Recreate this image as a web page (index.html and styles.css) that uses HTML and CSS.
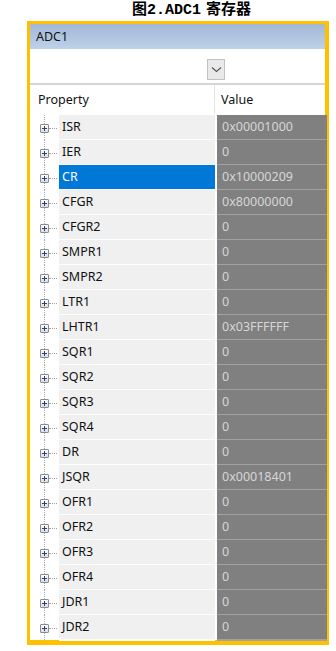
FILE: index.html
```html
<!DOCTYPE html>
<html>
<head>
<meta charset="utf-8">
<link rel="stylesheet" href="styles.css">
</head>
<body>
<div class="title">图2.ADC1 寄存器</div>
<div class="panel">
  <div class="caption">ADC1</div>
  <div class="toolbar"><span class="dd"><svg width="11" height="7" viewBox="0 0 11 7"><path d="M1 1.5 L5.5 5.5 L10 1.5" fill="none" stroke="#555" stroke-width="1.1"/></svg></span></div>
  <div class="head">
    <div class="hp">Property</div>
    <div class="hv">Value</div>
  </div>
  <div class="rows">
    <div class="row"><div class="gut"><span class="pb"></span><span class="dl"></span></div><div class="pn">ISR</div><div class="pv">0x00001000</div></div>
    <div class="row"><div class="gut"><span class="pb"></span><span class="dl"></span></div><div class="pn">IER</div><div class="pv">0</div></div>
    <div class="row sel"><div class="gut"><span class="pb"></span><span class="dl"></span></div><div class="pn">CR</div><div class="pv">0x10000209</div></div>
    <div class="row"><div class="gut"><span class="pb"></span><span class="dl"></span></div><div class="pn">CFGR</div><div class="pv">0x80000000</div></div>
    <div class="row"><div class="gut"><span class="pb"></span><span class="dl"></span></div><div class="pn">CFGR2</div><div class="pv">0</div></div>
    <div class="row"><div class="gut"><span class="pb"></span><span class="dl"></span></div><div class="pn">SMPR1</div><div class="pv">0</div></div>
    <div class="row"><div class="gut"><span class="pb"></span><span class="dl"></span></div><div class="pn">SMPR2</div><div class="pv">0</div></div>
    <div class="row"><div class="gut"><span class="pb"></span><span class="dl"></span></div><div class="pn">LTR1</div><div class="pv">0</div></div>
    <div class="row"><div class="gut"><span class="pb"></span><span class="dl"></span></div><div class="pn">LHTR1</div><div class="pv">0x03FFFFFF</div></div>
    <div class="row"><div class="gut"><span class="pb"></span><span class="dl"></span></div><div class="pn">SQR1</div><div class="pv">0</div></div>
    <div class="row"><div class="gut"><span class="pb"></span><span class="dl"></span></div><div class="pn">SQR2</div><div class="pv">0</div></div>
    <div class="row"><div class="gut"><span class="pb"></span><span class="dl"></span></div><div class="pn">SQR3</div><div class="pv">0</div></div>
    <div class="row"><div class="gut"><span class="pb"></span><span class="dl"></span></div><div class="pn">SQR4</div><div class="pv">0</div></div>
    <div class="row"><div class="gut"><span class="pb"></span><span class="dl"></span></div><div class="pn">DR</div><div class="pv">0</div></div>
    <div class="row"><div class="gut"><span class="pb"></span><span class="dl"></span></div><div class="pn">JSQR</div><div class="pv">0x00018401</div></div>
    <div class="row"><div class="gut"><span class="pb"></span><span class="dl"></span></div><div class="pn">OFR1</div><div class="pv">0</div></div>
    <div class="row"><div class="gut"><span class="pb"></span><span class="dl"></span></div><div class="pn">OFR2</div><div class="pv">0</div></div>
    <div class="row"><div class="gut"><span class="pb"></span><span class="dl"></span></div><div class="pn">OFR3</div><div class="pv">0</div></div>
    <div class="row"><div class="gut"><span class="pb"></span><span class="dl"></span></div><div class="pn">OFR4</div><div class="pv">0</div></div>
    <div class="row"><div class="gut"><span class="pb"></span><span class="dl"></span></div><div class="pn">JDR1</div><div class="pv">0</div></div>
    <div class="row"><div class="gut"><span class="pb"></span><span class="dl"></span></div><div class="pn">JDR2</div><div class="pv">0</div></div>
  </div>
</div>
</body>
</html>
```
FILE: styles.css
```css
html, body { margin: 0; padding: 0; background: #fff; }
body { width: 336px; height: 651px; overflow: hidden; font-family: "Noto Sans", "Liberation Sans", sans-serif; }

.title {
  height: 21px;
  padding-left: 132px;
  font-family: "Liberation Mono", "Noto Sans CJK SC", monospace;
  font-weight: 700;
  font-size: 15px;
  line-height: 21px;
  word-spacing: -4px;
  color: #000;
  white-space: nowrap;
}

.panel {
  margin-left: 27px;
  width: 295px;
  border-style: solid;
  border-color: #ffc000;
  border-width: 3px 4px 5px 3px;
  background: #fff;
}

.caption {
  height: 25px;
  background: linear-gradient(to bottom, #a3b8d6, #bdd1ea);
  font-size: 12.5px;
  line-height: 25px;
  padding-left: 6px;
  color: #111;
}

.toolbar {
  display: flex;
  align-items: flex-start;
  box-sizing: border-box;
  height: 36px;
  padding-left: 177px;
  padding-top: 10px;
  border-bottom: 2px solid #d6d6d6;
}
.dd {
  width: 16px;
  height: 19px;
  background: #e9e9e9;
  border: 1px solid #c2c2c2;
  display: flex;
  align-items: center;
  justify-content: center;
}

.head {
  display: grid;
  grid-template-columns: 185px 110px;
  height: 29px;
  border-bottom: 1px solid #fff;
}
.hp, .hv {
  font-size: 12.5px;
  line-height: 29px;
  color: #111;
}
.hp { padding-left: 8px; border-right: 1px solid #e4e4e4; }
.hv { padding-left: 6px; }

.row {
  display: grid;
  grid-template-columns: 27px 156px 110px;
  column-gap: 2px;
  height: 25px;
}
.gut {
  display: flex;
  align-items: center;
  padding-left: 10px;
  background: repeating-linear-gradient(to bottom, #a8a8a8 0 1px, transparent 1px 2px) 14px 0 / 1px 100% no-repeat;
}
.pb {
  width: 7px;
  height: 7px;
  border: 1px solid #8c8c8c;
  border-radius: 1px;
  background:
    linear-gradient(#2b3f86, #2b3f86) center / 5px 1px no-repeat,
    linear-gradient(#2b3f86, #2b3f86) center / 1px 5px no-repeat,
    linear-gradient(to bottom, #ffffff, #dcdcdc);
}
.dl {
  width: 8px;
  height: 0;
  border-top: 1px dotted #a0a0a0;
}
.pn {
  background: #f0f0f0;
  border-bottom: 2px solid #fdfdfd;
  padding-left: 3px;
  font-size: 12.5px;
  line-height: 24px;
  color: #111;
}
.pv {
  background: #808080;
  border-bottom: 2px solid #a2a2a2;
  padding-left: 5px;
  font-size: 12.5px;
  line-height: 24px;
  color: #d6d6d6;
}
.sel .pn { background: #0078d7; color: #fff; }
```
